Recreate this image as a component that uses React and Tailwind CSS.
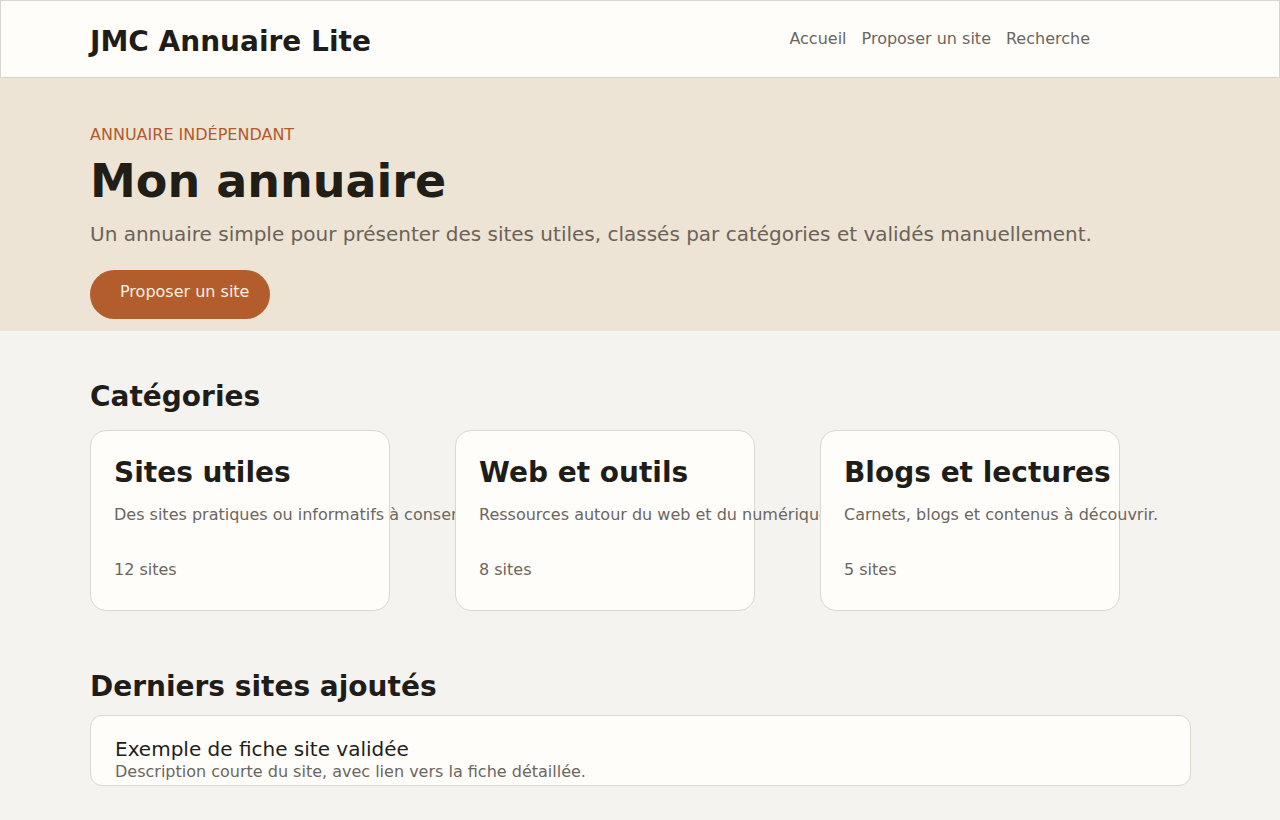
const categories = [
  { name: 'Sites utiles', desc: 'Des sites pratiques ou informatifs à conserver.', count: 12 },
  { name: 'Web et outils', desc: 'Ressources autour du web et du numérique.', count: 8 },
  { name: 'Blogs et lectures', desc: 'Carnets, blogs et contenus à découvrir.', count: 5 },
];

export default function App() {
  return (
    <div className="min-h-[820px] bg-[#f5f3ef] text-[#1f1d1a] font-['DejaVu_Sans',sans-serif]">
      {/* Header */}
      <header className="h-[78px] bg-[#fffdf9] border border-[#d9d6d0] flex items-center">
        <div className="w-full pl-[89px] pr-[189px] flex items-center justify-between">
          <a className="text-[28px] font-bold leading-none mt-[5px]">JMC Annuaire Lite</a>
          <nav className="flex gap-[15px] text-[16px] text-[#6b6660]">
            <a>Accueil</a>
            <a>Proposer un site</a>
            <a>Recherche</a>
          </nav>
        </div>
      </header>

      {/* Hero */}
      <section className="bg-[#ede4d6] h-[253px] pt-[45px]">
        <div className="px-[90px]">
          <p className="text-[16px] leading-[24px] uppercase text-[#b3592b]">Annuaire indépendant</p>
          <h1 className="text-[46px] font-bold leading-[56px] mt-[6px] text-[#211e18]">Mon annuaire</h1>
          <p className="text-[20px] leading-[30px] mt-[10px] text-[#6b6258]">
            Un annuaire simple pour présenter des sites utiles, classés par catégories et validés manuellement.
          </p>
          <button className="mt-[21px] h-[49px] rounded-full bg-[#b45d2c] pl-[30px] pr-[21px] text-[16px] text-[#fbefe3] pb-[6px]">
            Proposer un site
          </button>
        </div>
      </section>

      {/* Main */}
      <main className="px-[90px] pt-[48px]">
        <h2 className="text-[28px] font-bold leading-[36px]">Catégories</h2>
        <div className="mt-[15px] flex gap-[65px]">
          {categories.map(cat => (
            <div
              key={cat.name}
              className="w-[300px] h-[181px] rounded-[16px] border border-[#dcd8cf] bg-[#fffdf9] px-[23px] pt-[25px] whitespace-nowrap"
            >
              <h3 className="text-[28px] font-bold leading-[34px]">{cat.name}</h3>
              <p className="mt-[13px] text-[16px] leading-[24px] text-[#6b6660]">{cat.desc}</p>
              <p className="mt-[31px] text-[16px] leading-[24px] text-[#6b6660]">{cat.count} sites</p>
            </div>
          ))}
        </div>

        <h2 className="mt-[58px] text-[28px] font-bold leading-[36px]">Derniers sites ajoutés</h2>
        <div className="mt-[10px] w-[1101px] h-[71px] rounded-[12px] border border-[#dcd8cf] bg-[#fffdf9] pl-[24px] pt-[21px]">
          <h3 className="text-[20px] leading-[24px] text-[#1f1d1a]">Exemple de fiche site validée</h3>
          <p className="text-[16px] leading-[22px] text-[#6b6660]">Description courte du site, avec lien vers la fiche détaillée.</p>
        </div>
      </main>
    </div>
  );
}
